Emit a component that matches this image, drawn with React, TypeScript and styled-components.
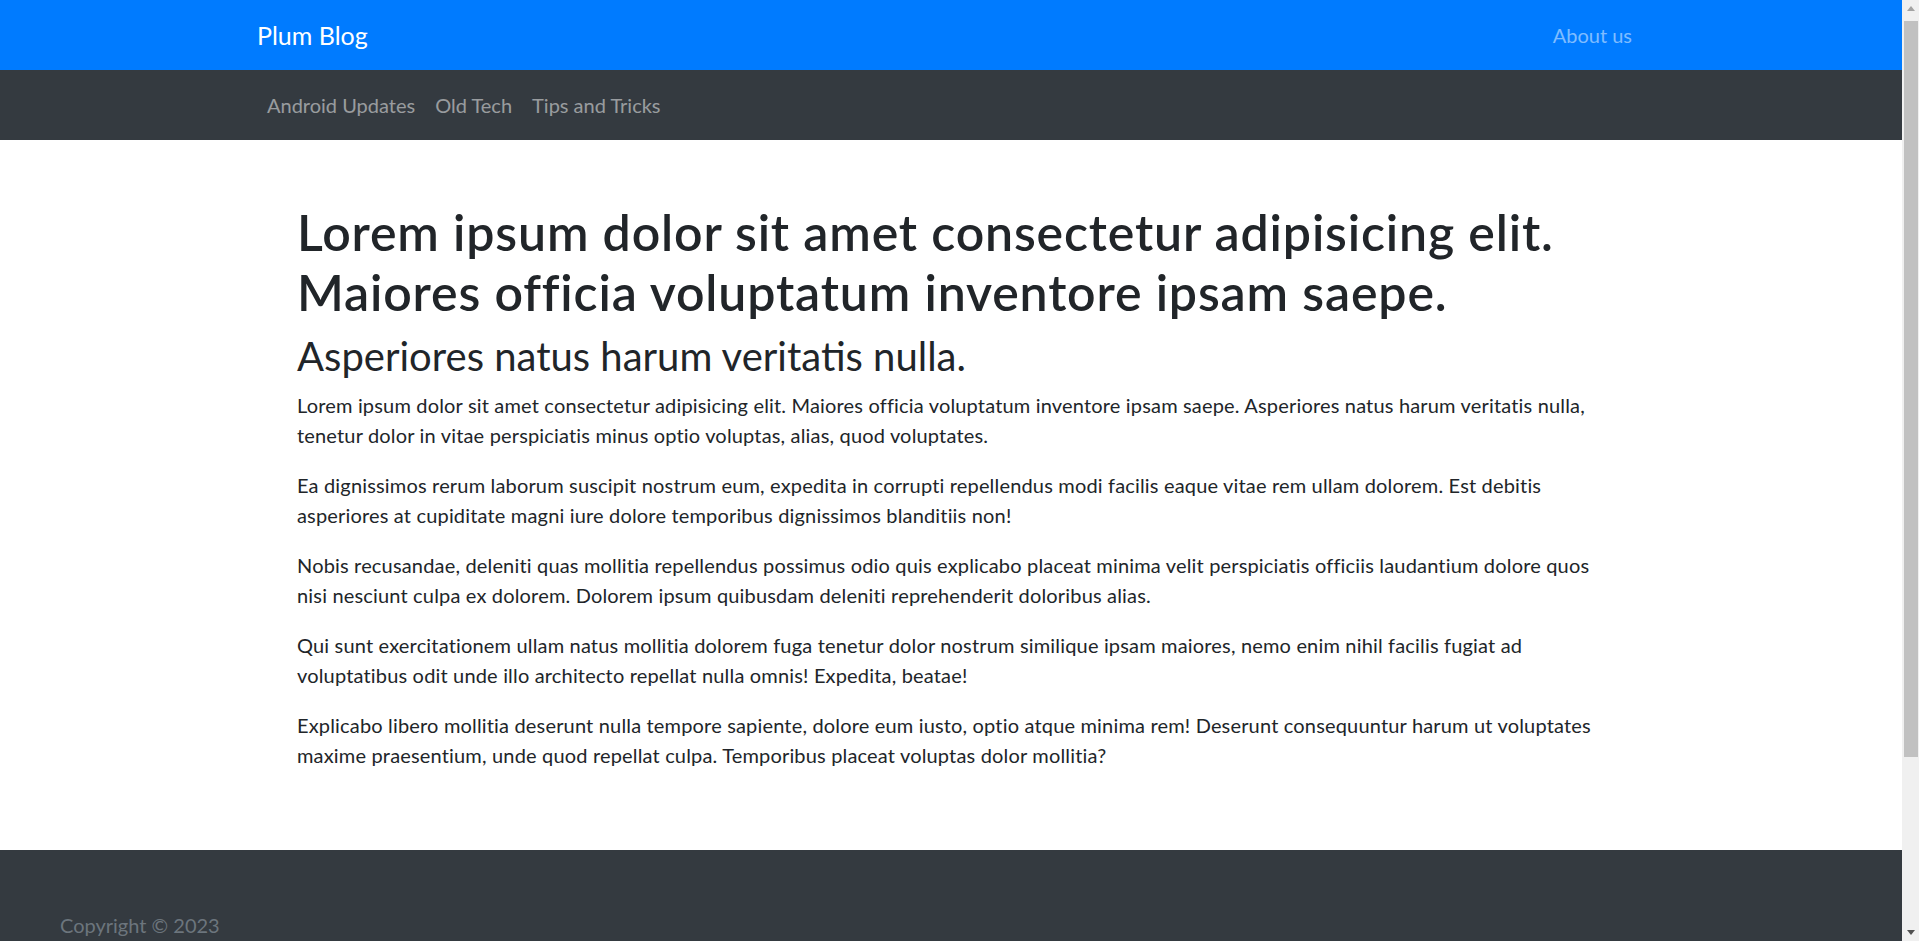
import React from 'react';
import styled, { createGlobalStyle } from 'styled-components';

const colors = {
  primary: '#007bff',
  dark: '#343a40',
  text: '#212529',
  muted: '#6c757d',
  navLinkOnPrimary: 'rgba(255, 255, 255, 0.5)',
  navLinkOnDark: 'rgba(255, 255, 255, 0.5)',
  scrollTrack: '#f0f0f0',
  scrollThumb: '#c1c1c1',
  arrowDisabled: '#a3a3a3',
  arrowActive: '#505050',
};

const GlobalStyle = createGlobalStyle`
  html, body {
    margin: 0;
    padding: 0;
  }

  body {
    background: #fff;
    color: ${colors.text};
    font-family: Lato, "Open Sans", "Liberation Sans", sans-serif;
    font-size: 20px;
    line-height: 30px;
  }

  * {
    box-sizing: border-box;
  }
`;

const Shell = styled.div`
  display: flex;
`;

const Page = styled.div`
  flex: 1;
  min-width: 0;
`;

// stand-in for the classic browser scrollbar seen in the capture
const ScrollRail = styled.div`
  align-self: flex-start;
  background: ${colors.scrollTrack};
  display: flex;
  flex-direction: column;
  height: 100vh;
  position: sticky;
  top: 0;
  width: 17px;
`;

const ScrollArrow = styled.div<{ $down?: boolean }>`
  align-items: center;
  display: flex;
  flex: 0 0 17px;
  justify-content: center;

  &::before {
    border-left: 4.5px solid transparent;
    border-right: 4.5px solid transparent;
    ${p =>
      p.$down
        ? `border-top: 5px solid ${colors.arrowActive};`
        : `border-bottom: 5px solid ${colors.arrowDisabled};`}
    content: '';
  }
`;

const ScrollTrack = styled.div`
  flex: 1;
  padding: 4px 1px 0 2px;
`;

const ScrollThumb = styled.div`
  background: ${colors.scrollThumb};
  height: 736px;
`;

const Header = styled.header`
  background: ${colors.primary};
`;

const SubNav = styled.nav`
  background: ${colors.dark};
`;

const NavContainer = styled.div`
  align-items: center;
  display: flex;
  height: 70px;
  justify-content: space-between;
  margin: 0 auto;
  max-width: 1388px;
`;

const Brand = styled.a`
  color: #fff;
  font-size: 25px;
  line-height: 37px;
  text-decoration: none;
`;

const NavList = styled.ul`
  display: flex;
  list-style: none;
  margin: 0;
  padding: 0;
`;

const HeaderLinks = styled(NavList)`
  margin-right: 3px;
`;

const NavLink = styled.a<{ $onDark?: boolean }>`
  color: ${p => (p.$onDark ? colors.navLinkOnDark : colors.navLinkOnPrimary)};
  display: block;
  font-size: 20px;
  line-height: 30px;
  padding: 10px;
  text-decoration: none;

  &:hover {
    color: rgba(255, 255, 255, 0.75);
  }
`;

const Main = styled.main`
  margin: 0 auto;
  max-width: 1308px;
  padding: 62px 0 60px;
`;

const Title = styled.h1`
  font-size: 50px;
  font-weight: 600;
  letter-spacing: 0.85px;
  line-height: 60px;
  margin: 0 0 10px;
`;

const Subtitle = styled.h2`
  font-size: 40px;
  font-weight: 400;
  line-height: 48px;
  margin: 0 0 10px;
`;

const Paragraph = styled.p`
  font-size: 20px;
  letter-spacing: 0.17px;
  line-height: 30px;
  margin: 0 0 20px;
`;

const Footer = styled.footer`
  background: ${colors.dark};
  min-height: 310px;
  padding: 60px 60px;
`;

const Copyright = styled.p`
  color: ${colors.muted};
  font-size: 20px;
  line-height: 30px;
  margin: 0;
`;

const categories = ['Android Updates', 'Old Tech', 'Tips and Tricks'];

const paragraphs = [
  'Lorem ipsum dolor sit amet consectetur adipisicing elit. Maiores officia voluptatum inventore ipsam saepe. Asperiores natus harum veritatis nulla, tenetur dolor in vitae perspiciatis minus optio voluptas, alias, quod voluptates.',
  'Ea dignissimos rerum laborum suscipit nostrum eum, expedita in corrupti repellendus modi facilis eaque vitae rem ullam dolorem. Est debitis asperiores at cupiditate magni iure dolore temporibus dignissimos blanditiis non!',
  'Nobis recusandae, deleniti quas mollitia repellendus possimus odio quis explicabo placeat minima velit perspiciatis officiis laudantium dolore quos nisi nesciunt culpa ex dolorem. Dolorem ipsum quibusdam deleniti reprehenderit doloribus alias.',
  'Qui sunt exercitationem ullam natus mollitia dolorem fuga tenetur dolor nostrum similique ipsam maiores, nemo enim nihil facilis fugiat ad voluptatibus odit unde illo architecto repellat nulla omnis! Expedita, beatae!',
  'Explicabo libero mollitia deserunt nulla tempore sapiente, dolore eum iusto, optio atque minima rem! Deserunt consequuntur harum ut voluptates maxime praesentium, unde quod repellat culpa. Temporibus placeat voluptas dolor mollitia?',
];

const App = () => (
  <Shell>
    <GlobalStyle />
    <Page>
      <Header>
        <NavContainer>
          <Brand href="#">Plum Blog</Brand>
          <HeaderLinks>
            <li>
              <NavLink href="#">About us</NavLink>
            </li>
          </HeaderLinks>
        </NavContainer>
      </Header>
      <SubNav>
        <NavContainer>
          <NavList>
            {categories.map(category => (
              <li key={category}>
                <NavLink $onDark href="#">
                  {category}
                </NavLink>
              </li>
            ))}
          </NavList>
        </NavContainer>
      </SubNav>
      <Main>
        <Title>
          Lorem ipsum dolor sit amet consectetur adipisicing elit. Maiores
          officia voluptatum inventore ipsam saepe.
        </Title>
        <Subtitle>Asperiores natus harum veritatis nulla.</Subtitle>
        {paragraphs.map((text, index) => (
          <Paragraph key={index}>{text}</Paragraph>
        ))}
      </Main>
      <Footer>
        <Copyright>Copyright © 2023</Copyright>
      </Footer>
    </Page>
    <ScrollRail>
      <ScrollArrow />
      <ScrollTrack>
        <ScrollThumb />
      </ScrollTrack>
      <ScrollArrow $down />
    </ScrollRail>
  </Shell>
);

export default App;
